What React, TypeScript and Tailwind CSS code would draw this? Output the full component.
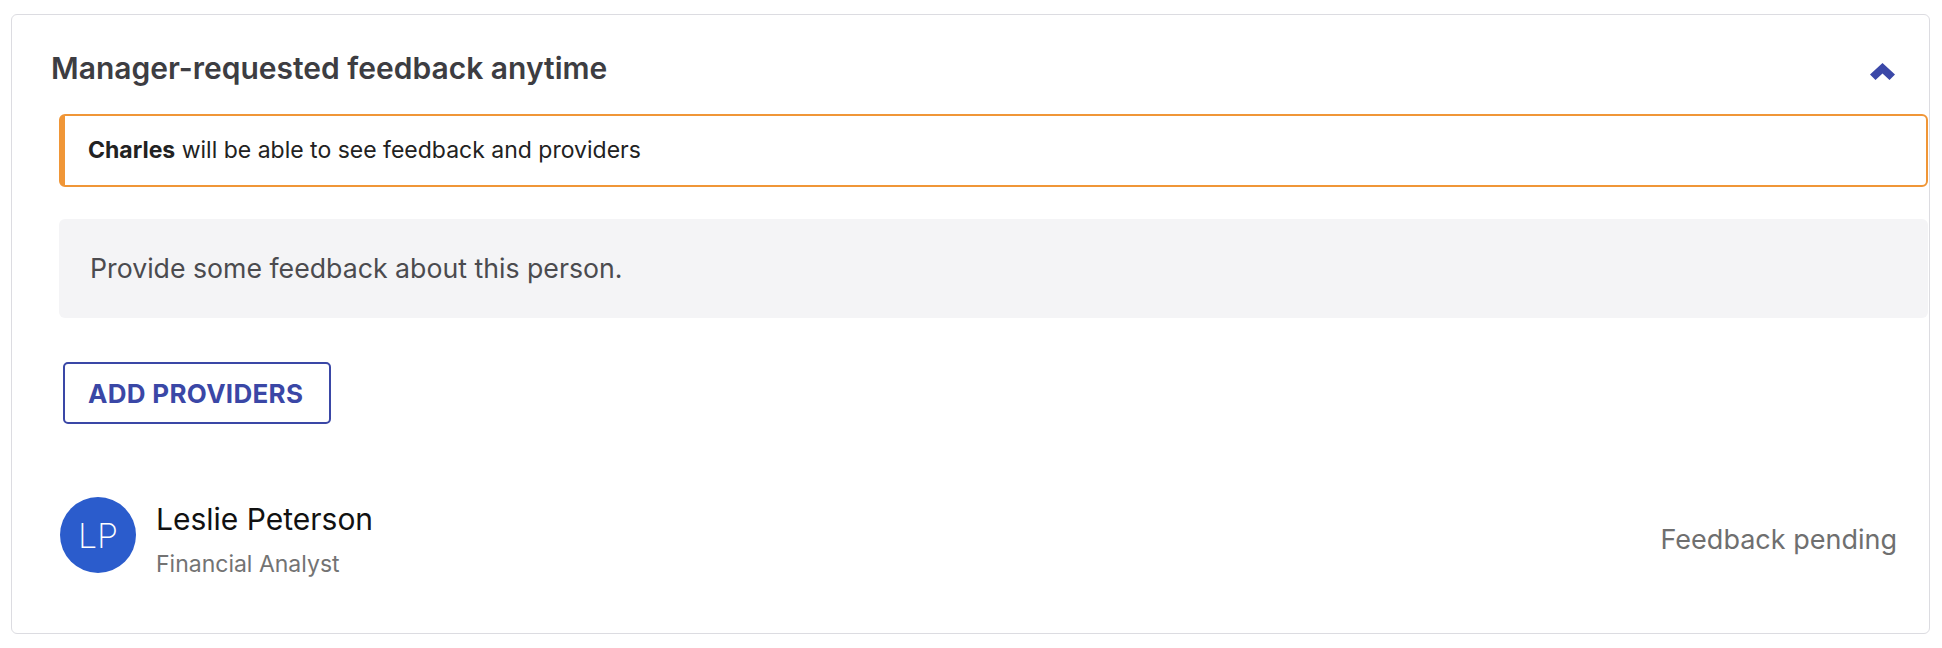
import React from "react";

export default function App() {
  const font = { fontFamily: "Inter, 'Noto Sans', sans-serif" };
  return (
    <div className="w-[1942px] h-[648px] bg-white overflow-hidden" style={font}>
      <div className="ml-[11px] mt-[14px] w-[1919px] h-[620px] border border-[#dcdce1] rounded-[6px] bg-white box-border">
        {/* header */}
        <div className="h-[99px] pt-[35px] pl-[39px] pr-[34px] box-border">
          <div className="h-[36px] flex items-center justify-between">
            <h2 className="text-[30px] leading-[36px] font-semibold text-[#3d3d42]">
              Manager-requested feedback anytime
            </h2>
            <svg width="25" height="17" viewBox="0 0 25 17" className="mt-[7px]">
              <polygon points="12.5,0 25,11.5 19.5,17 12.5,10.5 5.5,17 0,11.5" fill="#3b48a8" />
            </svg>
          </div>
        </div>

        {/* notice */}
        <div className="ml-[47px] w-[1869px] h-[73px] box-border border-2 border-l-[6px] border-[#f09637] rounded-[6px] flex items-center pl-[23px]">
          <p className="text-[23px] text-[#222222]">
            <span className="font-bold">Charles</span> will be able to see feedback and providers
          </p>
        </div>

        {/* feedback box */}
        <div className="mt-[32px] ml-[47px] w-[1869px] h-[99px] bg-[#f4f4f6] rounded-[6px] flex items-center pl-[31px]">
          <p className="text-[26.7px] text-[#4b4b4f]">Provide some feedback about this person.</p>
        </div>

        {/* button */}
        <div className="mt-[44px] ml-[51px]">
          <button className="w-[268px] h-[62px] box-border border-2 border-[#3a47a6] rounded-[5px] flex items-center pl-[23px] text-[26px] tracking-[0.3px] font-bold text-[#3a47a6] bg-white">
            ADD PROVIDERS
          </button>
        </div>

        {/* person row */}
        <div className="mt-[73px] ml-[48px] pr-[32px] flex items-start justify-between">
          <div className="flex items-start gap-[20px]">
            <div className="w-[76px] h-[76px] rounded-full bg-[#2b5ccc] flex items-center justify-center">
              <span className="text-white text-[34px] font-extralight">LP</span>
            </div>
            <div className="flex flex-col mt-[4px]">
              <span className="text-[30px] leading-[36px] text-[#111111]">Leslie Peterson</span>
              <span className="text-[23px] leading-[30px] mt-[12px] text-[#737373]">Financial Analyst</span>
            </div>
          </div>
          <span className="text-[27px] leading-[36px] text-[#6f6f6f] mt-[25px]">Feedback pending</span>
        </div>
      </div>
    </div>
  );
}
